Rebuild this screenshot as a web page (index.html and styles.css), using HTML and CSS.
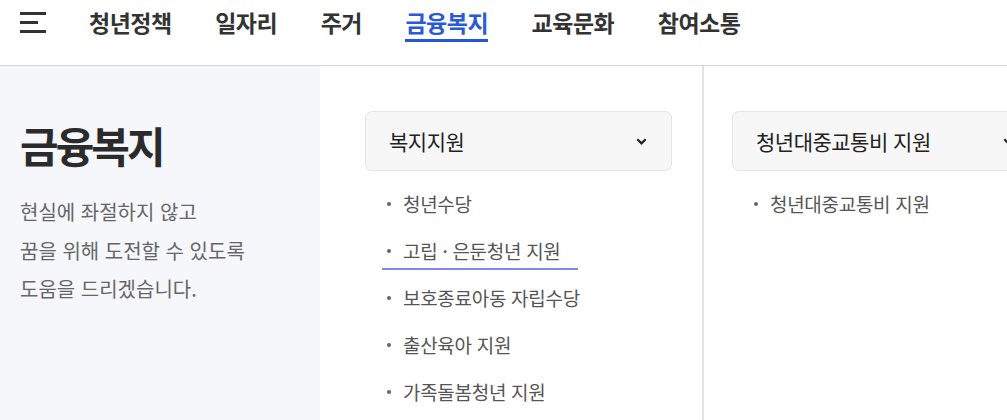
FILE: index.html
```html
<!DOCTYPE html>
<html lang="ko">
<head>
    <meta charset="UTF-8">
    <meta name="viewport" content="width=device-width, initial-scale=1.0">
    <title>금융복지</title>
    <link rel="stylesheet" href="styles.css">
</head>
<body>

    <!-- Top navigation -->
    <header class="gnb">
        <button class="menu-btn" aria-label="전체메뉴">
            <span class="bar"></span>
            <span class="bar bar-short"></span>
            <span class="bar"></span>
        </button>
        <nav class="gnb-menu">
            <a href="#">청년정책</a>
            <a href="#">일자리</a>
            <a href="#">주거</a>
            <a href="#" class="active">금융복지</a>
            <a href="#">교육문화</a>
            <a href="#">참여소통</a>
        </nav>
    </header>

    <div class="sub-wrap">
        <!-- Intro panel -->
        <aside class="intro">
            <h1>금융복지</h1>
            <p>현실에 좌절하지 않고<br>꿈을 위해 도전할 수 있도록<br>도움을 드리겠습니다.</p>
        </aside>

        <!-- Category columns -->
        <section class="cat-col first">
            <div class="cat-select">
                <span>복지지원</span>
                <svg width="11" height="7" viewBox="0 0 11 7"><polyline points="1.3,1.3 5.5,5.4 9.7,1.3" fill="none" stroke="#222" stroke-width="2.2"/></svg>
            </div>
            <ul class="cat-list">
                <li><a href="#">청년수당</a></li>
                <li class="marked"><a href="#">고립 · 은둔청년 지원</a></li>
                <li><a href="#">보호종료아동 자립수당</a></li>
                <li><a href="#">출산육아 지원</a></li>
                <li><a href="#">가족돌봄청년 지원</a></li>
            </ul>
        </section>

        <section class="cat-col">
            <div class="cat-select">
                <span>청년대중교통비 지원</span>
                <svg width="11" height="7" viewBox="0 0 11 7"><polyline points="1.3,1.3 5.5,5.4 9.7,1.3" fill="none" stroke="#222" stroke-width="2.2"/></svg>
            </div>
            <ul class="cat-list">
                <li><a href="#">청년대중교통비 지원</a></li>
            </ul>
        </section>
    </div>

</body>
</html>
```

FILE: styles.css
```css
/* Basic Styling */
* {
    box-sizing: border-box;
}
body {
    margin: 0;
    font-family: "Noto Sans CJK KR", "Noto Sans", sans-serif;
    background-color: #fff;
    color: #222;
    overflow: hidden;
}
a {
    color: inherit;
    text-decoration: none;
}
ul {
    list-style: none;
    margin: 0;
    padding: 0;
}

/* Header */
.gnb {
    display: flex;
    align-items: flex-start;
    height: 66px;
    padding: 7px 0 0 20px;
    border-bottom: 1px solid #d4d4d4;
}
.menu-btn {
    display: flex;
    flex-direction: column;
    gap: 6px;
    width: 26px;
    margin-top: 5px;
    padding: 0;
    border: none;
    background: none;
    cursor: pointer;
}
.menu-btn .bar {
    display: block;
    width: 26px;
    height: 3px;
    background-color: #333;
}
.menu-btn .bar-short {
    width: 18px;
}
.gnb-menu {
    display: flex;
    gap: 43.5px;
    margin-left: 43px;
}
.gnb-menu a {
    display: block;
    font-size: 23px;
    font-weight: 700;
    letter-spacing: -0.5px;
    line-height: 30px;
    padding-bottom: 2px;
    color: #333;
    border-bottom: 3px solid transparent;
}
.gnb-menu a.active {
    color: #2a5bd7;
    border-bottom-color: #2357d6;
}

/* Sub layout */
.sub-wrap {
    display: flex;
    height: 354px;
}
.intro {
    flex: 0 0 320px;
    background-color: #f5f7fb;
    padding: 54px 20px 0;
}
.intro h1 {
    margin: 0;
    font-size: 42px;
    font-weight: 700;
    letter-spacing: -3px;
    line-height: 50px;
    color: #2b2b2b;
}
.intro p {
    margin: 23px 0 0;
    font-size: 20px;
    letter-spacing: 0;
    line-height: 38.5px;
    color: #666;
}

.cat-col {
    flex: 0 0 auto;
    padding: 45px 0 0 28px;
}
.cat-col.first {
    width: 384px;
    padding-left: 45px;
    border-right: 2px solid #e3e3e3;
}
.cat-select {
    display: flex;
    align-items: center;
    justify-content: space-between;
    width: 307px;
    height: 60px;
    padding: 0 24px 0 23px;
    background-color: #f7f7f7;
    border: 1px solid #e4e4e4;
    border-radius: 7px;
    font-size: 21px;
    letter-spacing: -0.5px;
    color: #222;
}
.cat-list {
    margin-top: 9px;
    padding-left: 22px;
}
.cat-list li {
    position: relative;
    padding-left: 16px;
    font-size: 19px;
    letter-spacing: -0.3px;
    line-height: 47px;
    color: #555;
}
.cat-list li::before {
    content: "";
    position: absolute;
    left: 0;
    top: 22px;
    width: 4px;
    height: 4px;
    border-radius: 50%;
    background-color: #666;
}
.cat-list li.marked::after {
    content: "";
    position: absolute;
    left: -5px;
    width: 196px;
    bottom: 4px;
    height: 2px;
    background-color: #8087f2;
}
```
